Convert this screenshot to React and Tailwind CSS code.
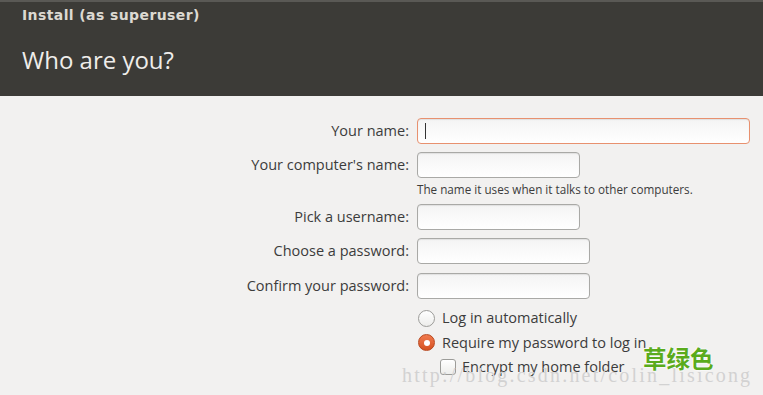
import React from "react";

const font = { fontFamily: '"Open Sans", "Noto Sans CJK SC", sans-serif' };

const Field = ({ label, width, focused, hint }) => (
  <div className="flex flex-col">
    <div className="flex items-center">
      <label className="w-[409px] text-right text-[14.5px] leading-[20px] text-[#3c3c3c]">
        {label}
      </label>
      <div
        className={`ml-2 flex h-[26px] items-center rounded-[4px] border bg-gradient-to-b from-[#f4f4f4] to-white shadow-[inset_0_1px_1px_rgba(0,0,0,0.08)] ${width} ${
          focused
            ? "border-[#e8916f] shadow-[0_0_0_1px_rgba(240,160,130,0.35)]"
            : "border-[#a9a9a6]"
        }`}
      >
        {focused && <div className="ml-[7px] h-[16px] w-px bg-[#333]" />}
      </div>
    </div>
    {hint && (
      <p className="ml-[417px] mt-[3px] text-[11.7px] leading-[16px] text-[#3c3c3c]">{hint}</p>
    )}
  </div>
);

const Radio = ({ checked, label }) => (
  <div className="flex items-center gap-[7px]">
    {checked ? (
      <span className="flex h-[17px] w-[17px] items-center justify-center rounded-full border border-[#b8481f] bg-gradient-to-b from-[#f07a4e] to-[#d6511f]">
        <span className="h-[6px] w-[6px] rounded-full bg-white" />
      </span>
    ) : (
      <span className="h-[17px] w-[17px] rounded-full border border-[#9c9c99] bg-gradient-to-b from-white to-[#ededeb]" />
    )}
    <span className="text-[14.5px] leading-[20px] text-[#3c3c3c]">{label}</span>
  </div>
);

export default function App() {
  return (
    <div className="relative h-[395px] w-[763px] overflow-hidden bg-[#f2f1f0]" style={font}>
      {/* Header */}
      <div className="h-[96px] border-t-2 border-[#5a5955] bg-[#3c3b37] pl-[22px]">
        <div
          className="pt-[3px] text-[14px] font-bold tracking-[0.4px] text-[#dcd9d2]"
          style={{ fontFamily: '"DejaVu Sans", sans-serif' }}
        >
          Install (as superuser)
        </div>
        <div className="mt-[16px] text-[24px] text-[#efedea]">Who are you?</div>
      </div>

      {/* Form */}
      <div className="flex flex-col pt-[22px]">
        <Field label="Your name:" width="w-[333px]" focused />
        <div className="mt-[8px]">
          <Field
            label="Your computer's name:"
            width="w-[163px]"
            hint="The name it uses when it talks to other computers."
          />
        </div>
        <div className="mt-[7px]">
          <Field label="Pick a username:" width="w-[163px]" />
        </div>
        <div className="mt-[8px]">
          <Field label="Choose a password:" width="w-[173px]" />
        </div>
        <div className="mt-[9px]">
          <Field label="Confirm your password:" width="w-[173px]" />
        </div>

        <div className="ml-[418px] mt-[9px] flex flex-col gap-[4.5px]">
          <Radio label="Log in automatically" />
          <Radio checked label="Require my password to log in" />
          <div className="ml-[22px] flex items-center gap-[6px]">
            <span className="h-[16px] w-[16px] rounded-[3px] border border-[#9c9c99] bg-gradient-to-b from-white to-[#ededeb]" />
            <span className="text-[14.5px] leading-[20px] text-[#3c3c3c]">Encrypt my home folder</span>
          </div>
        </div>
      </div>

      {/* Overlays */}
      <div
        className="pointer-events-none absolute left-[402px] top-[360px] text-[20px] tracking-[2.2px] text-[#d2d2d2]"
        style={{ fontFamily: '"Liberation Serif", serif' }}
      >
        http://blog.csdn.net/colin_lisicong
      </div>
      <div
        className="pointer-events-none absolute left-[643px] top-[341px] text-[23.5px] font-semibold text-[#5aab1c] [text-shadow:0_0_2px_white,0_0_2px_white]"
        style={{ fontFamily: '"Noto Sans CJK SC", sans-serif' }}
      >
        草绿色
      </div>
    </div>
  );
}
